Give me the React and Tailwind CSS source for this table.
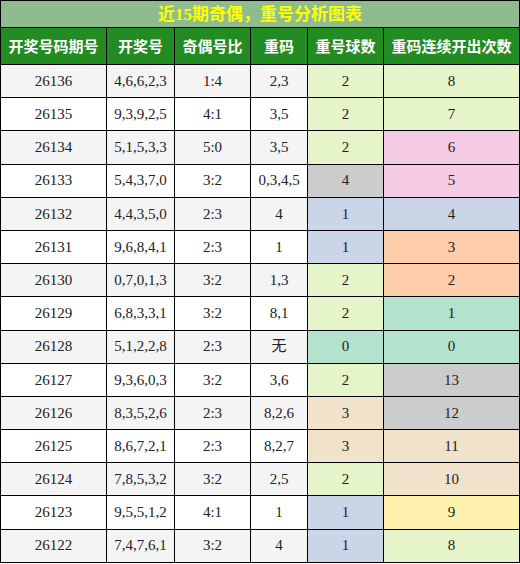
const rows = [
  ["26136", "4,6,6,2,3", "1:4", "2,3", "2", "8"],
  ["26135", "9,3,9,2,5", "4:1", "3,5", "2", "7"],
  ["26134", "5,1,5,3,3", "5:0", "3,5", "2", "6"],
  ["26133", "5,4,3,7,0", "3:2", "0,3,4,5", "4", "5"],
  ["26132", "4,4,3,5,0", "2:3", "4", "1", "4"],
  ["26131", "9,6,8,4,1", "2:3", "1", "1", "3"],
  ["26130", "0,7,0,1,3", "3:2", "1,3", "2", "2"],
  ["26129", "6,8,3,3,1", "3:2", "8,1", "2", "1"],
  ["26128", "5,1,2,2,8", "2:3", "无", "0", "0"],
  ["26127", "9,3,6,0,3", "3:2", "3,6", "2", "13"],
  ["26126", "8,3,5,2,6", "2:3", "8,2,6", "3", "12"],
  ["26125", "8,6,7,2,1", "2:3", "8,2,7", "3", "11"],
  ["26124", "7,8,5,3,2", "3:2", "2,5", "2", "10"],
  ["26123", "9,5,5,1,2", "4:1", "1", "1", "9"],
  ["26122", "7,4,7,6,1", "3:2", "4", "1", "8"],
];

// pastel colours per count
const ballBg = {
  "0": "bg-[#b3e2cd]",
  "1": "bg-[#cbd5e8]",
  "2": "bg-[#e6f5c9]",
  "3": "bg-[#f1e2cc]",
  "4": "bg-[#cccccc]",
};

const streakBg = {
  "0": "bg-[#b3e2cd]",
  "1": "bg-[#b3e2cd]",
  "2": "bg-[#fdcdac]",
  "3": "bg-[#fdcdac]",
  "4": "bg-[#cbd5e8]",
  "5": "bg-[#f4cae4]",
  "6": "bg-[#f4cae4]",
  "7": "bg-[#e6f5c9]",
  "8": "bg-[#e6f5c9]",
  "9": "bg-[#fff2ae]",
  "10": "bg-[#f1e2cc]",
  "11": "bg-[#f1e2cc]",
  "12": "bg-[#cccccc]",
  "13": "bg-[#cccccc]",
};

const headers = ["开奖号码期号", "开奖号", "奇偶号比", "重码", "重号球数", "重码连续开出次数"];

export default function App() {
  return (
    <div className="w-[520px] h-[564px] bg-white">
      <table className="w-[520px] table-fixed border-collapse border border-black font-['Liberation_Serif','Noto_Sans_CJK_SC',serif] text-[15px] text-[#222]">
        <colgroup>
          <col className="w-[106px]" />
          <col className="w-[68px]" />
          <col className="w-[76px]" />
          <col className="w-[57px]" />
          <col className="w-[76px]" />
          <col />
        </colgroup>
        <thead>
          <tr className="h-[27px]">
            <th
              colSpan={6}
              className="bg-[#8fbc8f] text-[#ffff00] text-[17px] font-bold text-center border border-black p-0 leading-none"
            >
              近15期奇偶，重号分析图表
            </th>
          </tr>
          <tr className="h-[37px] bg-[#228b22]">
            {headers.map((h) => (
              <th
                key={h}
                className="border border-black text-white font-bold text-[15px] text-center p-0 font-['Noto_Sans_CJK_SC',sans-serif]"
              >
                {h}
              </th>
            ))}
          </tr>
        </thead>
        <tbody>
          {rows.map((r, i) => (
            <tr key={r[0]} className={`h-[33.2px] ${i % 2 === 0 ? "bg-[#f4f4f4]" : "bg-white"}`}>
              <td className="border border-black text-center p-0">{r[0]}</td>
              <td className="border border-black text-center p-0">{r[1]}</td>
              <td className="border border-black text-center p-0">{r[2]}</td>
              <td className="border border-black text-center p-0">{r[3]}</td>
              <td className={`border border-black text-center p-0 ${ballBg[r[4]]}`}>{r[4]}</td>
              <td className={`border border-black text-center p-0 ${streakBg[r[5]]}`}>{r[5]}</td>
            </tr>
          ))}
        </tbody>
      </table>
    </div>
  );
}
